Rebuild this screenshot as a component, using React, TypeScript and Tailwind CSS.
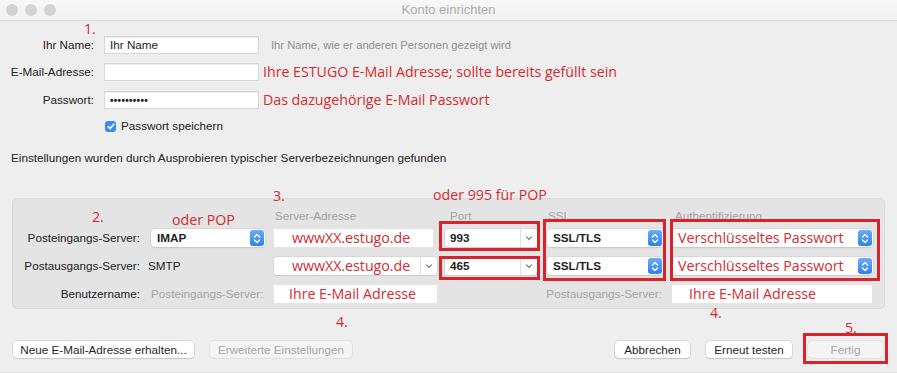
import React from "react";

const RED = "text-[#d42a2f]";
const redFont = { fontFamily: '"Open Sans", "Noto Sans", sans-serif' };

const Stepper: React.FC = () => (
  <span className="flex h-[16px] w-[14px] items-center justify-center rounded-[3px] bg-gradient-to-b from-[#6cabf9] to-[#2f7ff2]">
    <svg width="8" height="11" viewBox="0 0 8 11" fill="none" stroke="white" strokeWidth="1.4" strokeLinecap="round" strokeLinejoin="round">
      <path d="M1.5 4 L4 1.5 L6.5 4" />
      <path d="M1.5 7 L4 9.5 L6.5 7" />
    </svg>
  </span>
);

const Chevron: React.FC = () => (
  <span className="flex h-full w-[17px] items-center justify-center border-l border-[#e2e2e2]">
    <svg width="8" height="6" viewBox="0 0 8 6" fill="none" stroke="#7a7a7a" strokeWidth="1.2" strokeLinecap="round" strokeLinejoin="round">
      <path d="M1.5 1.8 L4 4.3 L6.5 1.8" />
    </svg>
  </span>
);

const Select: React.FC<{ w: string; children: React.ReactNode; red?: boolean }> = ({ w, children, red }) => (
  <div className={`${w} flex h-[18px] items-center justify-between rounded-[4px] bg-white pl-[6px] pr-[1px] shadow-[0_0_0_0.5px_#c9c9c9,0_1px_1px_rgba(0,0,0,0.12)]`}>
    {red ? (
      <span className={`${RED} text-[14.2px] leading-none`} style={redFont}>
        {children}
      </span>
    ) : (
      <span className="font-bold text-[#1f1f1f]">{children}</span>
    )}
    <Stepper />
  </div>
);

const Combo: React.FC<{ w: string; children: React.ReactNode; red?: boolean }> = ({ w, children, red }) => (
  <div className={`${w} flex h-[18px] items-center justify-between rounded-[3px] bg-white shadow-[0_0_0_0.5px_#c9c9c9,0_1px_1px_rgba(0,0,0,0.1)]`}>
    {red ? (
      <span className={`${RED} pl-[18px] text-[14.2px] leading-none`} style={redFont}>
        {children}
      </span>
    ) : (
      <span className="pl-[5px] font-bold text-[#1f1f1f]">{children}</span>
    )}
    <Chevron />
  </div>
);

const RedInput: React.FC<{ w: string; pl: string; children: React.ReactNode }> = ({ w, pl, children }) => (
  <div className={`${w} ${pl} flex h-[18px] items-center bg-white`}>
    <span className={`${RED} text-[14.2px] leading-none`} style={redFont}>
      {children}
    </span>
  </div>
);

const Field: React.FC<{ children?: React.ReactNode }> = ({ children }) => (
  <div className="flex h-[18px] w-[155px] items-center border border-[#d6d6d6] bg-white pl-[5px] shadow-[inset_0_1px_0_#ececec]">
    {children}
  </div>
);

const Btn: React.FC<{ w: string; disabled?: boolean; children: React.ReactNode }> = ({ w, disabled, children }) => (
  <div
    className={`${w} flex h-[17px] items-center justify-center rounded-[4px] ${
      disabled
        ? "bg-[#f4f4f4] text-[#a8a8a8] shadow-[0_0_0_0.5px_#d4d4d4]"
        : "bg-white text-[#1f1f1f] shadow-[0_0_0_0.5px_#c4c4c4,0_1px_1px_rgba(0,0,0,0.15)]"
    }`}
  >
    {children}
  </div>
);

const Box: React.FC<{ className: string }> = ({ className }) => (
  <div className={`pointer-events-none absolute border-[3px] border-[#d7232b] ${className}`} />
);

const Note: React.FC<{ className: string; children: React.ReactNode }> = ({ className, children }) => (
  <span className={`absolute ${RED} whitespace-nowrap text-[14.2px] leading-[19px] ${className}`} style={redFont}>
    {children}
  </span>
);

export default function App() {
  return (
    <div
      className="relative h-[373px] w-[897px] overflow-hidden bg-[#eeeeee] text-[11.7px] text-[#222]"
      style={{ fontFamily: '"Liberation Sans", Arial, sans-serif' }}
    >
      {/* title bar */}
      <div className="relative flex h-[21px] items-center justify-center border-b border-[#d9d9d9] bg-gradient-to-b from-[#f8f8f8] to-[#f1f1f1]">
        <div className="absolute left-[6px] top-[4px] flex gap-[7px]">
          <span className="h-[12px] w-[12px] rounded-full bg-[#d3d3d3]" />
          <span className="h-[12px] w-[12px] rounded-full bg-[#d3d3d3]" />
          <span className="h-[12px] w-[12px] rounded-full bg-[#d3d3d3]" />
        </div>
        <span className="text-[13px] text-[#ababab]">Konto einrichten</span>
      </div>

      {/* account form */}
      <div className="mt-[15px] flex h-[18px] items-center">
        <span className="w-[94px] text-right">Ihr Name:</span>
        <div className="ml-[10px]">
          <Field>
            <span>Ihr Name</span>
          </Field>
        </div>
        <span className="ml-[12px] text-[11.2px] text-[#8e8e8e]">Ihr Name, wie er anderen Personen gezeigt wird</span>
      </div>
      <div className="mt-[9px] flex h-[18px] items-center">
        <span className="w-[94px] text-right">E-Mail-Adresse:</span>
        <div className="ml-[10px]">
          <Field />
        </div>
        <span className={`ml-[4px] ${RED} text-[14.2px]`} style={redFont}>
          Ihre ESTUGO E-Mail Adresse; sollte bereits gefüllt sein
        </span>
      </div>
      <div className="mt-[10px] flex h-[18px] items-center">
        <span className="w-[94px] text-right">Passwort:</span>
        <div className="ml-[10px]">
          <Field>
            <span className="text-[10px] font-bold tracking-[0.3px]">••••••••••</span>
          </Field>
        </div>
        <span className={`ml-[4px] ${RED} text-[14.2px]`} style={redFont}>
          Das dazugehörige E-Mail Passwort
        </span>
      </div>
      <div className="ml-[105px] mt-[11px] flex h-[12px] items-center gap-[5px]">
        <span className="flex h-[11px] w-[11px] items-center justify-center rounded-[3px] bg-[#3b8cf5]">
          <svg width="8" height="7" viewBox="0 0 8 7" fill="none" stroke="white" strokeWidth="1.6" strokeLinecap="round" strokeLinejoin="round">
            <path d="M1.2 3.8 L3.2 5.6 L6.8 1.3" />
          </svg>
        </span>
        <span>Passwort speichern</span>
      </div>

      <div className="ml-[11px] mt-[19px] h-[14px] leading-[14px]">
        Einstellungen wurden durch Ausprobieren typischer Serverbezeichnungen gefunden
      </div>

      {/* server panel */}
      <div className="ml-[12px] mt-[33px] w-[873px] rounded-[5px] border border-[#dadada] bg-[#e4e4e4] pt-[8px]">
        <div className="flex h-[17px] items-center text-[#a3a3a3]">
          <span className="ml-[262px] w-[175px]">Server-Adresse</span>
          <span className="w-[98px]">Port</span>
          <span className="w-[127px]">SSL</span>
          <span>Authentifizierung</span>
        </div>

        <div className="flex h-[28px] items-center">
          <span className="w-[127px] text-right">Posteingangs-Server:</span>
          <div className="ml-[11px]">
            <Select w="w-[114px]">IMAP</Select>
          </div>
          <div className="ml-[9px]">
            <RedInput w="w-[159px]" pl="pl-[18px]">wwwXX.estugo.de</RedInput>
          </div>
          <div className="ml-[12px]">
            <Combo w="w-[92px]">993</Combo>
          </div>
          <div className="ml-[10px]">
            <Select w="w-[116px]">SSL/TLS</Select>
          </div>
          <div className="ml-[9px]">
            <Select w="w-[201px]" red>
              Verschlüsseltes Passwort
            </Select>
          </div>
        </div>

        <div className="flex h-[28px] items-center">
          <span className="w-[127px] text-right">Postausgangs-Server:</span>
          <span className="ml-[8px] w-[117px]">SMTP</span>
          <div className="ml-[9px]">
            <Combo w="w-[163px]" red>
              wwwXX.estugo.de
            </Combo>
          </div>
          <div className="ml-[8px]">
            <Combo w="w-[92px]">465</Combo>
          </div>
          <div className="ml-[10px]">
            <Select w="w-[116px]">SSL/TLS</Select>
          </div>
          <div className="ml-[9px]">
            <Select w="w-[201px]" red>
              Verschlüsseltes Passwort
            </Select>
          </div>
        </div>

        <div className="flex h-[28px] items-center">
          <span className="w-[127px] text-right">Benutzername:</span>
          <span className="ml-[11px] w-[114px] text-[#a6a6a6]">Posteingangs-Server:</span>
          <div className="ml-[9px]">
            <RedInput w="w-[163px]" pl="pl-[15px]">Ihre E-Mail Adresse</RedInput>
          </div>
          <span className="w-[225px] text-right text-[#a6a6a6]">Postausgangs-Server:</span>
          <div className="ml-[10px]">
            <RedInput w="w-[200px]" pl="pl-[17px]">Ihre E-Mail Adresse</RedInput>
          </div>
        </div>
      </div>

      {/* bottom buttons */}
      <div className="mt-[32px] flex items-center justify-between pl-[13px] pr-[14px]">
        <div className="flex gap-[16px]">
          <Btn w="w-[181px]">Neue E-Mail-Adresse erhalten...</Btn>
          <Btn w="w-[142px]" disabled>
            Erweiterte Einstellungen
          </Btn>
        </div>
        <div className="flex gap-[16px]">
          <Btn w="w-[75px]">Abbrechen</Btn>
          <Btn w="w-[86px]">Erneut testen</Btn>
          <Btn w="w-[75px]" disabled>
            Fertig
          </Btn>
        </div>
      </div>
      <div className="absolute bottom-0 left-0 h-[1px] w-full bg-[#dcdcdc]" />

      {/* annotations */}
      <Note className="left-[84px] top-[19px]">1.</Note>
      <Note className="left-[92px] top-[207px]">2.</Note>
      <Note className="left-[172px] top-[210px]">oder POP</Note>
      <Note className="left-[273px] top-[186px]">3.</Note>
      <Note className="left-[433px] top-[185px]">oder 995 für POP</Note>
      <Note className="left-[336px] top-[312px]">4.</Note>
      <Note className="left-[710px] top-[303px]">4.</Note>
      <Note className="left-[845px] top-[318px]">5.</Note>

      <Box className="left-[439px] top-[221px] h-[30px] w-[101px]" />
      <Box className="left-[439px] top-[256px] h-[24px] w-[101px]" />
      <Box className="left-[543px] top-[219px] h-[62px] w-[123px]" />
      <Box className="left-[670px] top-[219px] h-[62px] w-[210px]" />
      <Box className="left-[803px] top-[333px] h-[31px] w-[85px]" />
    </div>
  );
}
